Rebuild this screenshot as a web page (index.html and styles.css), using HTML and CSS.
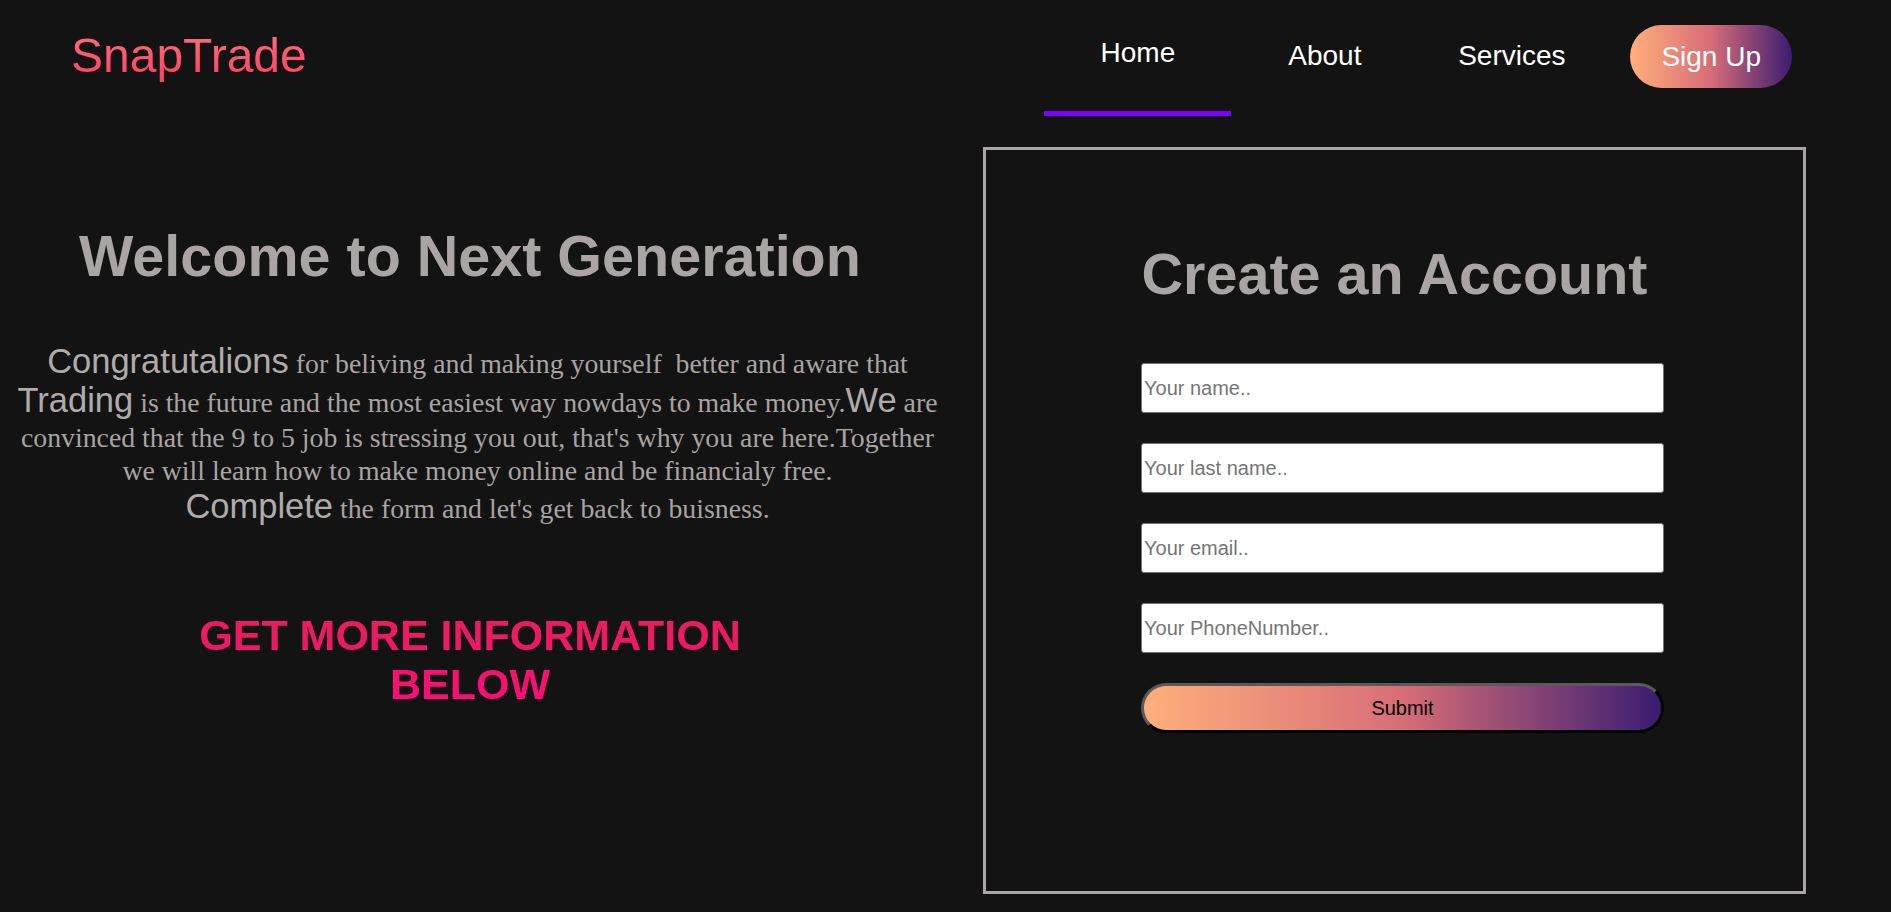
FILE: index.html
```html
<!DOCTYPE html>
<html lang="en">
<head>
<meta charset="utf-8">
<title>SnapTrade</title>
<link rel="stylesheet" href="styles.css">
</head>
<body>
<header class="header">
  <div class="logo">SnapTrade</div>
  <nav class="nav">
    <a class="nav-link active" href="#">Home</a>
    <a class="nav-link" href="#">About</a>
    <a class="nav-link" href="#">Services</a>
    <a class="signup" href="#">Sign Up</a>
  </nav>
</header>
<main class="main">
  <section class="intro">
    <h1 class="intro-title">Welcome to Next Generation</h1>
    <p class="intro-text"><span class="big">Congratutalions</span> for beliving and making yourself&nbsp; better and aware that<br><span class="big">Trading</span> is the future and the most easiest way nowdays to make money.<span class="big">We</span> are<br>convinced that the 9 to 5 job is stressing you out, that's why you are here.Together<br>we will learn how to make money online and be financialy free.<br><span class="big">Complete</span> the form and let's get back to buisness.</p>
    <h2 class="more">GET MORE INFORMATION BELOW</h2>
  </section>
  <section class="card">
    <h2 class="card-title">Create an Account</h2>
    <form class="form">
      <input class="field" type="text" placeholder="Your name..">
      <input class="field" type="text" placeholder="Your last name..">
      <input class="field" type="email" placeholder="Your email..">
      <input class="field" type="tel" placeholder="Your PhoneNumber..">
      <button class="submit" type="button">Submit</button>
    </form>
  </section>
</main>
</body>
</html>
```
FILE: styles.css
```css
html, body {
  margin: 0;
  padding: 0;
  background: #131313;
  font-family: "Liberation Sans", Arial, sans-serif;
}

.header {
  display: flex;
  align-items: flex-start;
  height: 147px;
  box-sizing: border-box;
  padding: 0 99px 0 71px;
}

.logo {
  margin-top: 28px;
  font-size: 48px;
  line-height: normal;
  background: linear-gradient(to bottom, #ff707e, #ff3e60);
  -webkit-background-clip: text;
  background-clip: text;
  color: transparent;
}

.nav {
  margin-left: auto;
  display: flex;
  align-items: flex-start;
}

.nav-link {
  width: 187px;
  margin-top: 40px;
  text-align: center;
  color: #ffffff;
  text-decoration: none;
  font-size: 28px;
  line-height: normal;
}

.nav-link.active {
  margin-top: 37px;
  padding-bottom: 42px;
  border-bottom: 5px solid #8000ff;
}

.signup {
  margin: 25px 0 0 25px;
  padding: 15px 31px;
  font-size: 28px;
  line-height: 33px;
  color: #ffffff;
  text-decoration: none;
  border-radius: 32px;
  background: linear-gradient(to right, #ffaf7b, #d76d77, #3a1c71);
}

.main {
  display: flex;
  align-items: flex-start;
}

.intro {
  width: 955px;
  flex: none;
  text-align: center;
}

.intro-title {
  margin: 76px 0 0;
  padding-right: 15px;
  font-size: 57.5px;
  font-weight: bold;
  line-height: normal;
  color: #aaa4a4;
}

.intro-text {
  margin: 53px 0 0;
  padding: 0 10px;
  font-family: "Liberation Serif", "Times New Roman", serif;
  font-size: 27.8px;
  line-height: 33px;
  color: #a9a3a3;
  white-space: nowrap;
}

.big {
  font-family: "Liberation Sans", Arial, sans-serif;
  font-size: 34.5px;
  line-height: 1.14;
  color: #b0abab;
}

.more {
  width: 600px;
  margin: 85px 0 0 170px;
  font-size: 43px;
  font-weight: bold;
  line-height: normal;
  background: linear-gradient(to bottom, #e91e5c, #ff0a7a);
  -webkit-background-clip: text;
  background-clip: text;
  color: transparent;
}

.card {
  width: 823px;
  height: 747px;
  flex: none;
  margin-left: 28px;
  box-sizing: border-box;
  border: 3px solid #aba6a6;
  padding-top: 91px;
}

.card-title {
  margin: 0;
  text-align: center;
  font-size: 57.5px;
  font-weight: bold;
  line-height: normal;
  color: #aaa4a4;
}

.form {
  display: flex;
  flex-direction: column;
  gap: 30px;
  width: 523px;
  margin: 56px 0 0 155px;
}

.field {
  height: 50px;
  box-sizing: border-box;
  margin: 0;
  padding: 1px 2px;
  border: 1px solid #767676;
  border-radius: 3px;
  background: #ffffff;
  font-family: "Liberation Sans", Arial, sans-serif;
  font-size: 20px;
  color: #222;
}

.field::placeholder {
  color: #757575;
}

.submit {
  height: 50px;
  box-sizing: border-box;
  margin: 0;
  border: 3px solid;
  border-color: #5a5a5a #000000 #000000 #5a5a5a;
  border-radius: 25px;
  background: linear-gradient(to right, #ffaf7b, #d76d77, #3a1c71);
  font-family: "Liberation Sans", Arial, sans-serif;
  font-size: 20px;
  color: #000000;
}
```
